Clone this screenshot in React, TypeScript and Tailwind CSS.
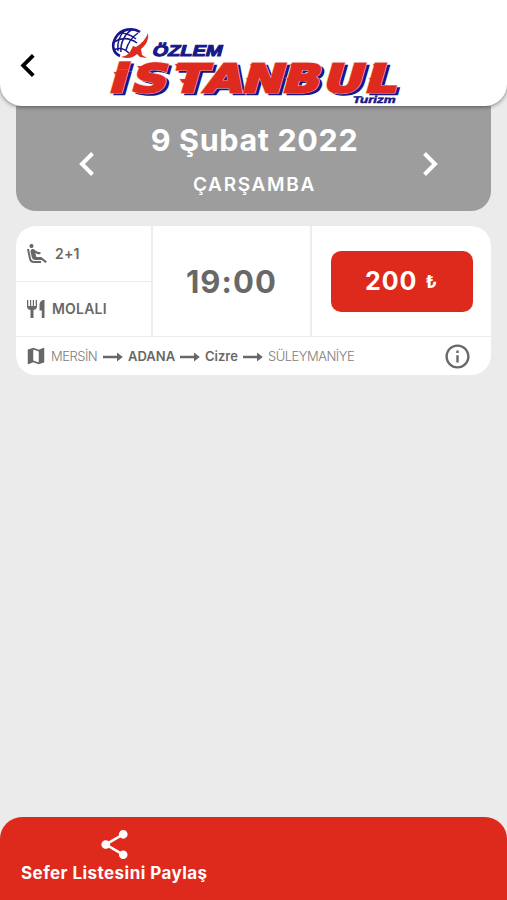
import type { ReactNode } from "react";
import {
  MdAirlineSeatReclineExtra,
  MdInfoOutline,
  MdMap,
  MdShare,
} from "react-icons/md";

type Stop = { name: string; active?: boolean; width: string };

const STOPS: Stop[] = [
  { name: "MERSİN", width: "w-[47px]" },
  { name: "ADANA", active: true, width: "w-[47px]" },
  { name: "Cizre", active: true, width: "w-[33px]" },
  { name: "SÜLEYMANİYE", width: "w-[87px]" },
];

// torn speed notches on the left side of the wordmark letters
const NOTCHES = [
  [11, -19],
  [33, -25],
  [70, -27],
  [79, -12],
  [111, -14],
  [145, -27],
  [145, -13],
  [185, -27],
  [185, -13],
  [227, -27],
  [227, -13],
  [268, -27],
  [268, -13],
];

const WORDMARK_LAYERS = [
  { x: 3, y: 70, color: "#17178a", stroke: 2.6 },
  { x: 0, y: 67.5, color: "#f3b6b3", stroke: 3.2 },
  { x: 0, y: 67.5, color: "#df2b1f", stroke: 2.3 },
];

function Chevron({ className, flip }: { className: string; flip?: boolean }) {
  return (
    <svg viewBox="0 0 16 26" fill="none" className={className}>
      <path
        d={flip ? "M2.5 2.5 13 13 2.5 23.5" : "M13.5 2.5 3 13l10.5 10.5"}
        stroke="currentColor"
        strokeWidth="4"
      />
    </svg>
  );
}

function Logo() {
  return (
    <svg
      viewBox="0 0 310 82"
      className="h-[82px] w-[310px] overflow-visible"
      fontFamily="'DejaVu Sans', sans-serif"
      fontWeight="bold"
    >
      {/* globe */}
      <g fill="none" stroke="#17178a" strokeWidth="1.5">
        <path d="M39 8C32 3 20 5 15 13 10 21 12 29 19 32" strokeWidth="2.6" />
        <path d="M13 18c8-5 16-4 23 1M12 26c6-3 12-1 16 3M19 9c6 0 11 2 16 6" />
        <path d="M32 5c-8 4-13 14-12 23M37 9c-6 4-10 10-12 17M24 6c-6 6-8 13-7 21" />
      </g>
      {/* bird */}
      <path
        d="M47 9c1 7-2 12-7 16l1 6 5 3-7-1-3-3c-4 4-9 5-16 3 5-1 8-3 10-7l2-4 3 1c5-3 10-8 12-14z"
        fill="#df2b1f"
      />
      <g transform="translate(50.500 31.500) skewX(-15)">
        <text
          fontFamily="'Liberation Sans', sans-serif"
          fontSize="15.5"
          textLength="70"
          lengthAdjust="spacingAndGlyphs"
          fill="#17178a"
          stroke="#17178a"
          strokeWidth="1"
        >
          ÖZLEM
        </text>
      </g>
      {WORDMARK_LAYERS.map((l, i) => (
        <g
          key={i}
          transform={`translate(${l.x} ${l.y}) skewX(-16)`}
          fill={l.color}
          stroke={l.color}
          strokeWidth={l.stroke}
        >
          <text
            transform="scale(1.28 1)"
            fontSize="38.5"
            x="5.500 22.500 54.500 79.500 109 140.500 172 205"
          >
            iSTANBUL
          </text>
          {NOTCHES.map(([x, y]) => (
            <path
              key={`${x}${y}`}
              d={`M${x + 4} ${y}h-7l3 3h4z`}
              strokeWidth={l.stroke - 1.6}
            />
          ))}
        </g>
      ))}
      <g transform="translate(251 79) skewX(-15)">
        <text
          fontFamily="'Liberation Sans', sans-serif"
          fontSize="10"
          textLength="43"
          lengthAdjust="spacingAndGlyphs"
          fill="#17178a"
          stroke="#17178a"
          strokeWidth=".5"
        >
          Turizm
        </text>
      </g>
    </svg>
  );
}

function RouteArrow() {
  return (
    <svg viewBox="0 0 20 10" className="h-2.5 w-5 shrink-0">
      <path d="M0 3.800h14V.5L19.800 5 14 9.500V6.200H0z" fill="currentColor" />
    </svg>
  );
}

function Cutlery() {
  return (
    <svg viewBox="0 0 18 20" className="h-5 w-[18px]" fill="currentColor">
      <path d="M0 1h1.300v6h1.700V1h1.200v6h1.600V1H7v6h1.700V1H10v6.500c0 2-1.200 3.200-3.500 3.500V19h-3v-8C1.200 10.700 0 9.500 0 7.500z" />
      <path d="M17.500 1v18h-2.700v-7.500H12.500V6c0-3 2-5 5-5z" />
    </svg>
  );
}

function Feature({ icon, children }: { icon: ReactNode; children: ReactNode }) {
  return (
    <div className="flex flex-1 items-center pt-px pl-[11px] text-sm font-semibold tracking-[0.2px]">
      {icon}
      {children}
    </div>
  );
}

export default function App() {
  return (
    <div className="flex h-[900px] w-[507px] flex-col overflow-hidden bg-[#ebebeb] font-['Inter',sans-serif] text-[#686868]">
      <header className="relative z-10 flex h-[106px] shrink-0 items-start rounded-b-[22px] bg-white shadow-[0_1px_4px_rgba(0,0,0,0.45)]">
        <Chevron className="mt-[53px] ml-5 h-[25px] w-4 text-black" />
        <div className="mt-6 ml-[65px]">
          <Logo />
        </div>
      </header>

      <section className="mx-4 flex h-[105px] shrink-0 items-center justify-between rounded-b-[20px] bg-[#9d9d9d] pr-[53px] pl-[63px] text-white">
        <Chevron className="mt-[10px] h-[26px] w-4" />
        <div className="-ml-2 pt-0.5 text-center">
          <p className="text-[30.5px] leading-9 font-bold tracking-[0.65px] whitespace-nowrap">
            9 Şubat 2022
          </p>
          <p className="mt-[15px] text-[19px] leading-6 font-semibold tracking-[1.7px]">
            ÇARŞAMBA
          </p>
        </div>
        <Chevron flip className="mt-[10px] h-[26px] w-4" />
      </section>

      <section className="mx-4 mt-[15px] flex h-[149px] shrink-0 flex-col overflow-hidden rounded-[20px] bg-white">
        <div className="flex h-[111px] border-b border-[#ededed]">
          <div className="flex w-[137px] flex-col border-r-2 border-[#ededed]">
            <Feature
              icon={
                <MdAirlineSeatReclineExtra className="mr-1.5 -ml-0.5 size-6" />
              }
            >
              2+1
            </Feature>
            <div className="h-px bg-[#ededed]" />
            <Feature
              icon={
                <span className="mr-[7px]">
                  <Cutlery />
                </span>
              }
            >
              MOLALI
            </Feature>
          </div>
          <div className="flex w-[159px] items-center justify-center border-r-2 border-[#ededed] pt-0.5 text-[31px] font-bold tracking-[1.1px]">
            19:00
          </div>
          <div className="flex flex-1 items-center justify-center">
            <button className="flex h-[61px] w-[142px] items-center justify-center rounded-[10px] bg-[#de2a1c] pt-px text-[25px] font-bold tracking-[1px] text-white">
              200
              <span className="ml-2 text-lg">₺</span>
            </button>
          </div>
        </div>
        <div className="flex flex-1 items-center pr-[19px] pl-[9px]">
          <MdMap className="mr-1 size-[22px]" />
          <div className="flex items-center gap-[5px] pt-0.5 text-[13px]">
            {STOPS.map((s, i) => (
              <div key={s.name} className="flex items-center gap-[5px]">
                {i > 0 && <RouteArrow />}
                <span
                  className={`${s.width} whitespace-nowrap ${
                    s.active
                      ? "font-semibold"
                      : "font-light tracking-[-0.5px] text-[#7c7c7c]"
                  }`}
                >
                  {s.name}
                </span>
              </div>
            ))}
          </div>
          <MdInfoOutline className="ml-auto size-[29px]" />
        </div>
      </section>

      <footer className="mt-auto flex h-[83px] shrink-0 rounded-t-[22px] bg-[#de2a1c] pl-[21px] text-white">
        <button className="flex flex-col items-center pt-2.5">
          <MdShare className="size-[35px]" />
          <span className="text-[17px] leading-[22px] font-bold tracking-[0.45px] whitespace-nowrap">
            Sefer Listesini Paylaş
          </span>
        </button>
      </footer>
    </div>
  );
}
